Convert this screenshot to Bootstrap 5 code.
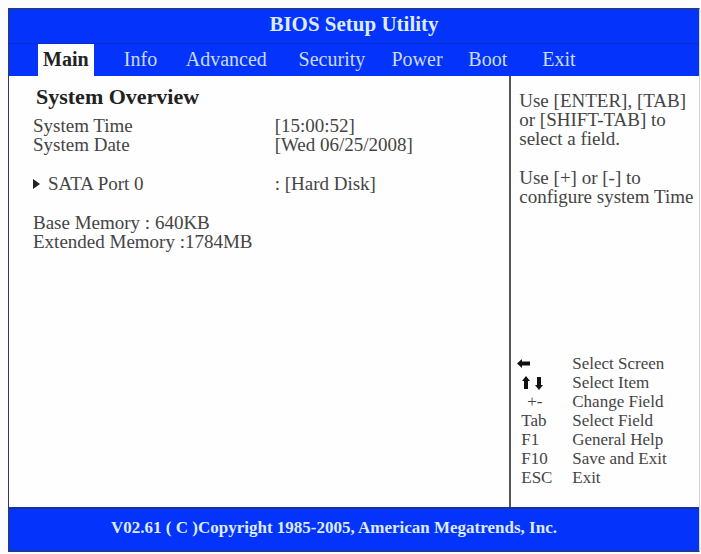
<!DOCTYPE html>
<html lang="en">
<head>
<meta charset="utf-8">
<meta name="viewport" content="width=device-width, initial-scale=1">
<title>BIOS Setup Utility</title>
<link href="https://cdn.jsdelivr.net/npm/bootstrap@5.3.0/dist/css/bootstrap.min.css" rel="stylesheet">
<style>
  body { font-family: "Liberation Serif", "Times New Roman", serif; font-size: 19px; line-height: 19px; color: #444; background: #fdfdfd; }
  .page { padding: 8px 1px 2px 8px; }
  .bios { border: 1px solid #333a55; border-right-color: #d4d4d4; background: #fefefe; }
  .bios-title { background: #0433fb; color: #dcebff; font-size: 21px; line-height: 24px; padding: 3px 0 7px; border-bottom: 1px solid #0a2bc4; }
  .bios-tabs { display: grid; grid-template-columns: 86fr 62fr 113fr 93fr 77fr 74fr 157fr; background: #0433fb; padding-left: 29px; }
  .bios-tabs a { color: #c9dcff; font-size: 20px; line-height: 24px; padding: 3px 0 5px; text-decoration: none; }
  .bios-tabs a.current { justify-self: start; background: #fefefe; color: #222; font-weight: bold; padding-left: 5px; padding-right: 5px; }
  .overview { padding: 9px 0 0 24px; }
  .overview h1 { font-size: 22px; line-height: 24px; color: #222; margin: 0 0 7px 3px; }
  .fields { display: grid; grid-template-columns: 241fr 234fr; }
  .fields dt, .fields dd { font-weight: normal; margin: 0; }
  .spaced { padding-top: 20px; }
  .fields a { color: inherit; text-decoration: none; }
  .caret { width: 7px; height: 10px; margin-right: 8px; fill: #222; }
  .help { flex: 0 0 27.5%; border-left: 2px solid #555; padding: 15px 0 20px 8px; }
  .help p { margin-bottom: 20px; }
  .keys { width: 100%; font-size: 17px; }
  .keys th { font-weight: normal; width: 53px; padding: 0 0 0 2px; }
  .keys td { padding: 0; }
  .keys svg { display: block; fill: #111; margin-left: -4px; }
  .bios-footer { background: #0433fb; color: #dcebff; font-size: 17px; line-height: 20px; border-top: 2px solid #1c2f9c; padding: 9px 40px 13px 0; }
</style>
<script src="https://cdn.jsdelivr.net/npm/bootstrap@5.3.0/dist/js/bootstrap.bundle.min.js"></script>
</head>
<body>
<div class="page min-vh-100 d-flex">
  <div class="bios flex-grow-1 d-flex flex-column">
    <header>
      <div class="bios-title text-center fw-bold">BIOS Setup Utility</div>
      <nav class="bios-tabs" aria-label="Setup sections">
        <a class="current" href="#main" aria-current="page">Main</a>
        <a href="#info">Info</a>
        <a href="#advanced">Advanced</a>
        <a href="#security">Security</a>
        <a href="#power">Power</a>
        <a href="#boot">Boot</a>
        <a href="#exit">Exit</a>
      </nav>
    </header>
    <div class="d-flex flex-grow-1">
      <main class="overview flex-grow-1" id="main">
        <h1 class="fw-bold">System Overview</h1>
        <dl class="fields mb-0">
          <dt>System Time</dt><dd>[15:00:52]</dd>
          <dt>System Date</dt><dd>[Wed 06/25/2008]</dd>
          <dt class="spaced"><a href="#sata0" class="d-flex align-items-center"><svg class="caret" viewBox="0 0 7 10" aria-hidden="true"><path d="M0 0 7 5 0 10Z"/></svg>SATA Port 0</a></dt>
          <dd class="spaced">: [Hard Disk]</dd>
        </dl>
        <div class="spaced">Base Memory : 640KB</div>
        <div>Extended Memory :1784MB</div>
      </main>
      <aside class="help d-flex flex-column justify-content-between">
        <div>
          <p>Use [ENTER], [TAB]<br>or [SHIFT-TAB] to<br>select a field.</p>
          <p>Use [+] or [-] to<br>configure system Time</p>
        </div>
        <table class="keys">
          <tbody>
            <tr><th scope="row"><svg width="28" height="13" viewBox="0 0 28 13" role="img" aria-label="Left arrow"><path d="M0 6.5 5 2V4.5H13V8.5H5V11Z"/></svg></th><td>Select Screen</td></tr>
            <tr><th scope="row"><svg width="30" height="14" viewBox="0 0 30 14" role="img" aria-label="Up and down arrows"><path d="M9 0 13 5H11V13H7V5H5ZM22 14 18 9H20V1H24V9H26Z"/></svg></th><td>Select Item</td></tr>
            <tr><th scope="row" class="ps-2">+-</th><td>Change Field</td></tr>
            <tr><th scope="row">Tab</th><td>Select Field</td></tr>
            <tr><th scope="row">F1</th><td>General Help</td></tr>
            <tr><th scope="row">F10</th><td>Save and Exit</td></tr>
            <tr><th scope="row">ESC</th><td>Exit</td></tr>
          </tbody>
        </table>
      </aside>
    </div>
    <footer class="bios-footer text-center fw-bold">V02.61 ( C )Copyright 1985-2005, American Megatrends, Inc.</footer>
  </div>
</div>
</body>
</html>
